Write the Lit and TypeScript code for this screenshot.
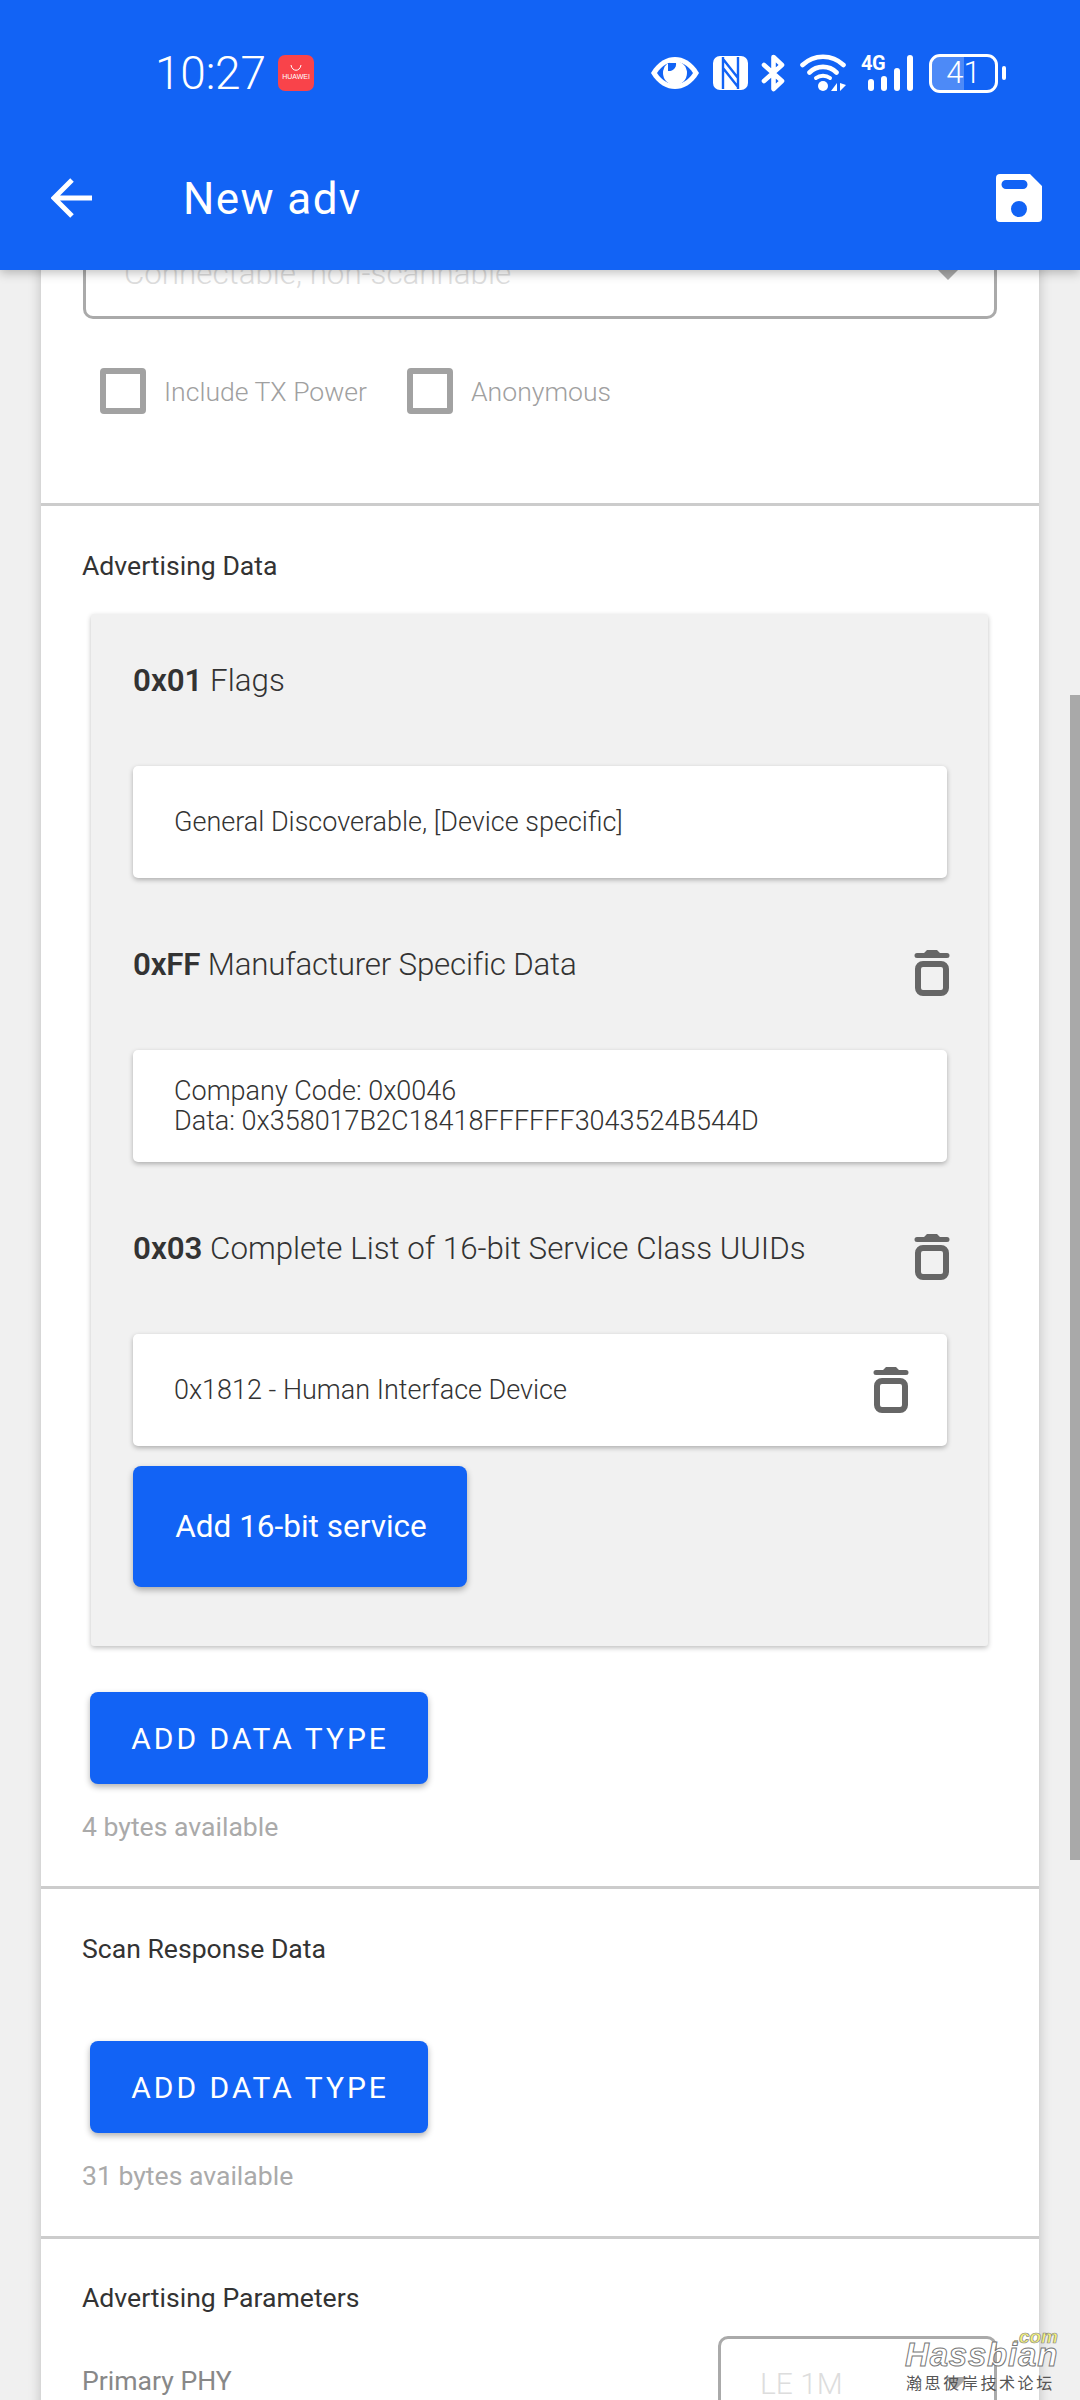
import { LitElement, html, css } from "lit";
import { customElement } from "lit/decorators.js";

const trash = html`<svg class="trash" viewBox="0 0 36 48"><path d="M10 5 L13 2 H23 L26 5 H33 a2.5 2.5 0 0 1 0 5 H3 a2.5 2.5 0 0 1 0 -5Z" fill="#666"/><rect x="4" y="16" width="28" height="29" rx="5" fill="none" stroke="#666" stroke-width="6"/></svg>`;

@customElement("app-root")
export class AppRoot extends LitElement {
  static styles = css`
    :host { display: block; font-family: Roboto, "Noto Sans", sans-serif; color: #333; }
    * { box-sizing: border-box; }
    .app { position: relative; width: 1080px; height: 2400px; overflow: hidden; background: #f0f0f0; }
    .header { position: relative; z-index: 2; height: 270px; background: #1263f5; color: #fff; box-shadow: 0 3px 10px rgba(0,0,0,.25); padding: 50px 38px 0 51px; }
    .status { display: flex; align-items: center; height: 46px; padding: 0 36px 0 104px; }
    .time { font-size: 46px; font-weight: 300; line-height: 46px; width: 123px; letter-spacing: -.2px; }
    .appicon { width: 36px; height: 36px; border-radius: 7px; background: #f9434a; display: flex; flex-direction: column; align-items: center; justify-content: center; font: 7px/8px "Liberation Sans", sans-serif; color: #fff; }
    .appicon svg { width: 12px; height: 6px; margin-bottom: 2px; }
    .sicons { display: flex; align-items: center; margin-left: auto; }
    .sicons svg { display: block; flex: none; }
    .net { position: relative; width: 53px; height: 38px; margin-left: 14px; }
    .net span { position: absolute; left: 1px; top: 1px; font: 700 20px/16px Roboto, sans-serif; letter-spacing: -.5px; }
    .batt { position: relative; display: flex; align-items: center; justify-content: center; width: 69px; height: 39px; margin-left: 16px; border: 3.5px solid #fff; border-radius: 11px; overflow: hidden; font-size: 31px; font-weight: 300; line-height: 32px; }
    .batt::before { content: ""; position: absolute; left: 0; top: 0; bottom: 0; width: 50%; background: rgba(255,255,255,.25); }
    .batt span { position: relative; }
    .nub { width: 4px; height: 14px; background: #fff; border-radius: 2px; margin: 0 0 0 4px; }
    .toolbar { display: flex; align-items: center; height: 48px; margin-top: 78px; }
    .toolbar h1 { margin: 2px 0 0 90px; font-size: 44px; font-weight: 400; line-height: 48px; letter-spacing: 1.4px; }
    .save { margin-left: auto; }

    main { height: 2130px; overflow: hidden; }
    .card { margin: -52px 0 0 41px; width: 998px; background: #fff; box-shadow: 0 0 12px rgba(0,0,0,.22); }
    section { padding: 0 42px; border-bottom: 3px solid #ccc; }
    .select { position: relative; display: flex; align-items: center; height: 101px; border: 3px solid #aaa; border-radius: 10px; padding: 10px 0 0 38px; font-size: 31.3px; color: #ddd; font-weight: 300; }
    .select i { position: absolute; right: 34px; top: 47px; border: 12px solid transparent; border-top: 12px solid #aaa; border-bottom: 0; }
    .checks { display: flex; align-items: center; margin: 49px 0 0 17px; height: 46px; font-size: 26.6px; color: #a0a0a0; font-weight: 300; }
    .cb { width: 46px; height: 46px; border: 6px solid #a2a2a2; border-radius: 4px; margin-right: 18px; }
    .checks span { width: 243px; }
    .s1 { height: 288px; }
    .s2 { padding-top: 45px; padding-bottom: 44px; }
    .s3 { padding-top: 45px; padding-bottom: 45px; }
    .s4 { padding-top: 44px; border: 0; }
    h2 { margin: 0 0 0 -1px; font-size: 26.6px; font-weight: 400; line-height: 30px; color: #333; }
    .panel { width: 897px; margin: 33px 0 0 8px; background: #f1f1f1; box-shadow: 0 2px 5px rgba(0,0,0,.25); border-radius: 3px; padding: 47px 41px 59px 42px; }
    .head { display: flex; justify-content: space-between; align-items: flex-start; height: 105px; font-size: 31.3px; line-height: 40px; font-weight: 300; color: #333; }
    .head b { font-weight: 600; }
    .head .trash { margin: 3px -3px 0 0; }
    .tight { letter-spacing: -.2px; }
    .dt + .dt { margin-top: 67px; }
    .item { display: flex; align-items: center; justify-content: space-between; height: 112px; padding: 0 38px 0 41px; background: #fff; border-radius: 5px; box-shadow: 0 2px 5px rgba(0,0,0,.28); font-size: 27px; line-height: 30px; font-weight: 300; color: #333; }
    .item .trash { margin-top: -3px; }
    .trash { display: block; width: 36px; height: 48px; flex: none; }
    .btn { display: flex; align-items: center; justify-content: center; background: #1263f5; color: #fff; border-radius: 8px; box-shadow: 0 3px 6px rgba(0,0,0,.3); }
    .add16 { width: 334px; height: 121px; margin-top: 20px; font-size: 31.5px; padding-left: 2px; }
    .addtype { width: 338px; height: 92px; margin: 46px 0 0 7px; padding-left: 2px; font-size: 30px; letter-spacing: 3px; }
    .s3 .addtype { margin-top: 77px; }
    .note { margin: 28px 0 0 -1px; font-size: 26.6px; line-height: 30px; color: #aaa; }
    .phy { display: flex; align-items: flex-start; justify-content: space-between; margin-top: 23px; height: 100px; }
    .phy > span { margin: 30px 0 0 -1px; font-size: 26.6px; line-height: 30px; color: #888; }
    .phy .select { width: 279px; height: 140px; padding: 27px 0 0 39px; font-size: 30px; align-items: flex-start; }
    .phy .select i { right: 26px; top: 38px; }

    .scroll { position: absolute; right: 0; top: 695px; width: 10px; height: 1165px; background: #a9a9a9; }
    .mark { position: absolute; z-index: 3; left: 905px; top: 2331px; width: 160px; height: 60px; }
    .mark .com { position: absolute; right: 7px; top: 0; font: italic 700 19px/11px "Liberation Sans", sans-serif; color: #f6f47a; -webkit-text-stroke: .7px #888; }
    .mark .has { position: absolute; left: 0; top: 11px; font: italic 700 33px/26px "Liberation Sans", sans-serif; letter-spacing: .8px; color: #fff; -webkit-text-stroke: 1px #777; }
    .mark .cn { position: absolute; left: 1px; bottom: 0; font: 400 16px/18px "Noto Sans CJK SC", sans-serif; letter-spacing: 2.6px; color: #555; white-space: nowrap; }
  `;

  render() {
    return html`<div class="app">
      <header class="header">
        <div class="status">
          <span class="time">10:27</span>
          <span class="appicon"><svg viewBox="0 0 12 6"><path d="M1 0 C2 7 10 7 11 0" fill="none" stroke="#fff" stroke-width="1"/></svg>HUAWEI</span>
          <div class="sicons">
            <svg width="50" height="34" viewBox="0 0 50 34"><path d="M1 17 C8 5 17 1 25 1 C33 1 42 5 49 17 C42 29 33 33 25 33 C17 33 8 29 1 17Z" fill="#fff"/><path d="M7 17 C12 9 19 6 25 6 C31 6 38 9 43 17 C38 25 31 28 25 28 C19 28 12 25 7 17Z" fill="#1263f5"/><circle cx="25" cy="17" r="12" fill="#fff"/><path d="M18 7 h8 a7 7 0 0 1 -8 8Z" fill="#1263f5"/></svg>
            <svg style="margin-left:13px" width="35" height="34" viewBox="0 0 35 34"><rect width="35" height="34" rx="7" fill="#fff"/><path d="M10 1 V33 M25 1 V33 M10 3 L25 22 M10 12 L25 31" fill="none" stroke="#1263f5" stroke-width="2.4"/></svg>
            <svg style="margin-left:13px" width="24" height="38" viewBox="0 0 24 38"><path d="M3 11 L21 27 L12.500 35 V3 L21 11 L3 27" fill="none" stroke="#fff" stroke-width="4.6" stroke-linejoin="round" stroke-linecap="round"/></svg>
            <svg style="margin-left:15px" width="46" height="38" viewBox="0 0 46 38"><path d="M2.500 11 C14 0 32 0 43.500 11 M9.500 18.500 C17 11 29 11 36.500 18.500" fill="none" stroke="#fff" stroke-width="4.6" stroke-linecap="round"/><path d="M16 24 C20 21 26 21 30 24" fill="none" stroke="#fff" stroke-width="4" stroke-linecap="round"/><circle cx="23" cy="32" r="5" fill="#fff"/><path d="M37 29 V37 L31 37Z M40 29 V37 L46 31Z" fill="#fff"/></svg>
            <div class="net"><span>4G</span><svg width="45" height="36" viewBox="0 0 45 36" style="position:absolute;right:0;top:1px"><g fill="#fff"><rect x="0" y="24" width="6" height="12" rx="3"/><rect x="13" y="21" width="6" height="15" rx="3"/><rect x="26" y="13" width="6" height="23" rx="3"/><rect x="39" y="0" width="6" height="36" rx="3"/></g></svg></div>
            <div class="batt"><span>41</span></div><span class="nub"></span>
          </div>
        </div>
        <div class="toolbar">
          <svg width="42" height="42" viewBox="0 0 42 42"><path d="M41 21 H3 M21 3 L3 21 L21 39" fill="none" stroke="#fff" stroke-width="5"/></svg>
          <h1>New adv</h1>
          <svg class="save" width="46" height="48" viewBox="0 0 46 48"><path fill-rule="evenodd" fill="#fff" d="M4 0 H34 L46 12 V44 a4 4 0 0 1 -4 4 H4 a4 4 0 0 1 -4 -4 V4 a4 4 0 0 1 4 -4Z M10 6 a4.500 4.500 0 0 0 0 9 H27 a4.500 4.500 0 0 0 0 -9Z M23 27 a8 8 0 1 0 0 16 a8 8 0 1 0 0 -16Z"/></svg>
        </div>
      </header>
      <main>
        <div class="card">
          <section class="s1">
            <div class="select">Connectable, non-scannable<i></i></div>
            <div class="checks"><div class="cb"></div><span>Include TX Power</span><div class="cb"></div>Anonymous</div>
          </section>
          <section class="s2">
            <h2>Advertising Data</h2>
            <div class="panel">
              <div class="dt"><div class="head"><span><b>0x01</b> Flags</span></div><div class="item"><span>General Discoverable, [Device specific]</span></div></div>
              <div class="dt"><div class="head"><span class="tight"><b>0xFF</b> Manufacturer Specific Data</span>${trash}</div><div class="item"><span>Company Code: 0x0046<br />Data: 0x358017B2C18418FFFFFF3043524B544D</span></div></div>
              <div class="dt"><div class="head"><span><b>0x03</b> Complete List of 16-bit Service Class UUIDs</span>${trash}</div><div class="item"><span>0x1812 - Human Interface Device</span>${trash}</div></div>
              <div class="btn add16">Add 16-bit service</div>
            </div>
            <div class="btn addtype">ADD DATA TYPE</div>
            <div class="note">4 bytes available</div>
          </section>
          <section class="s3">
            <h2>Scan Response Data</h2>
            <div class="btn addtype">ADD DATA TYPE</div>
            <div class="note">31 bytes available</div>
          </section>
          <section class="s4">
            <h2>Advertising Parameters</h2>
            <div class="phy"><span>Primary PHY</span><div class="select">LE 1M<i></i></div></div>
          </section>
        </div>
      </main>
      <div class="scroll"></div>
      <div class="mark"><span class="com">.com</span><span class="has">Hassbian</span><span class="cn">瀚思彼岸技术论坛</span></div>
    </div>`;
  }
}
